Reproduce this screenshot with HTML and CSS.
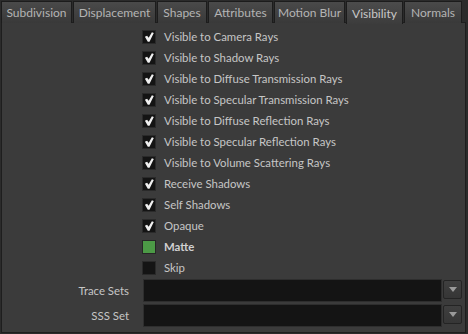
FILE: index.html
```html
<!DOCTYPE html>
<html>
<head>
  <title>Visibility</title>
  <link rel="stylesheet" href="styles.css">
</head>
<body>
  <!-- Tab bar -->
  <div class="tabs">
    <div class="tab tab-subdiv">Subdivision</div>
    <div class="tab tab-disp">Displacement</div>
    <div class="tab tab-shapes">Shapes</div>
    <div class="tab tab-attr">Attributes</div>
    <div class="tab tab-blur">Motion Blur</div>
    <div class="tab tab-vis active">Visibility</div>
    <div class="tab tab-norm">Normals</div>
  </div>

  <div class="panel">
    <div class="check-row"><span class="box checked"><svg viewBox="0 0 14 14"><path d="M2.2 6.6 L4.8 5.4 L6.6 8 L10.4 1.4 L12.6 2.4 L7.6 12.4 L5.6 12.4 Z"/></svg></span>Visible to Camera Rays</div>
    <div class="check-row"><span class="box checked"><svg viewBox="0 0 14 14"><path d="M2.2 6.6 L4.8 5.4 L6.6 8 L10.4 1.4 L12.6 2.4 L7.6 12.4 L5.6 12.4 Z"/></svg></span>Visible to Shadow Rays</div>
    <div class="check-row"><span class="box checked"><svg viewBox="0 0 14 14"><path d="M2.2 6.6 L4.8 5.4 L6.6 8 L10.4 1.4 L12.6 2.4 L7.6 12.4 L5.6 12.4 Z"/></svg></span>Visible to Diffuse Transmission Rays</div>
    <div class="check-row"><span class="box checked"><svg viewBox="0 0 14 14"><path d="M2.2 6.6 L4.8 5.4 L6.6 8 L10.4 1.4 L12.6 2.4 L7.6 12.4 L5.6 12.4 Z"/></svg></span>Visible to Specular Transmission Rays</div>
    <div class="check-row"><span class="box checked"><svg viewBox="0 0 14 14"><path d="M2.2 6.6 L4.8 5.4 L6.6 8 L10.4 1.4 L12.6 2.4 L7.6 12.4 L5.6 12.4 Z"/></svg></span>Visible to Diffuse Reflection Rays</div>
    <div class="check-row"><span class="box checked"><svg viewBox="0 0 14 14"><path d="M2.2 6.6 L4.8 5.4 L6.6 8 L10.4 1.4 L12.6 2.4 L7.6 12.4 L5.6 12.4 Z"/></svg></span>Visible to Specular Reflection Rays</div>
    <div class="check-row"><span class="box checked"><svg viewBox="0 0 14 14"><path d="M2.2 6.6 L4.8 5.4 L6.6 8 L10.4 1.4 L12.6 2.4 L7.6 12.4 L5.6 12.4 Z"/></svg></span>Visible to Volume Scattering Rays</div>
    <div class="check-row"><span class="box checked"><svg viewBox="0 0 14 14"><path d="M2.2 6.6 L4.8 5.4 L6.6 8 L10.4 1.4 L12.6 2.4 L7.6 12.4 L5.6 12.4 Z"/></svg></span>Receive Shadows</div>
    <div class="check-row"><span class="box checked"><svg viewBox="0 0 14 14"><path d="M2.2 6.6 L4.8 5.4 L6.6 8 L10.4 1.4 L12.6 2.4 L7.6 12.4 L5.6 12.4 Z"/></svg></span>Self Shadows</div>
    <div class="check-row"><span class="box checked"><svg viewBox="0 0 14 14"><path d="M2.2 6.6 L4.8 5.4 L6.6 8 L10.4 1.4 L12.6 2.4 L7.6 12.4 L5.6 12.4 Z"/></svg></span>Opaque</div>
    <div class="check-row"><span class="box green"></span><span class="bold">Matte</span></div>
    <div class="check-row"><span class="box"></span>Skip</div>

    <div class="field-row first">
      <div class="field-label">Trace Sets</div>
      <div class="field"></div>
      <div class="menu-btn"><span class="arrow"></span></div>
    </div>
    <div class="field-row">
      <div class="field-label">SSS Set</div>
      <div class="field"></div>
      <div class="menu-btn"><span class="arrow"></span></div>
    </div>
  </div>
</body>
</html>
```

FILE: styles.css
```css
body {
  margin: 0;
  padding: 0;
  width: 468px;
  height: 334px;
  background-color: #2b2b2b;
  font-family: 'Lato', sans-serif;
  font-size: 11.4px;
  color: #c6c6c6;
  overflow: hidden;
}

.tabs {
  display: flex;
  height: 22px;
  padding-left: 1px;
}

.tab {
  box-sizing: border-box;
  height: 22px;
  margin-top: 1px;
  margin-right: 1px;
  border: 1px solid #1c1c1c;
  border-bottom: none;
  background: linear-gradient(#4a4a4a, #393939);
  font-size: 12px;
  color: #b4b4b4;
  display: flex;
  align-items: center;
  justify-content: center;
}

.tab-subdiv { width: 71px; }
.tab-disp { width: 83px; }
.tab-shapes { width: 50px; }
.tab-attr { width: 65px; }
.tab-blur { width: 71px; }
.tab-vis { width: 57px; }
.tab-norm { width: 58px; }

.tab.active {
  background: linear-gradient(#4c4c4c, #3c3c3c);
  color: #c8c8c8;
  height: 23px;
  position: relative;
  z-index: 1;
}

.panel {
  box-sizing: border-box;
  margin-left: 1px;
  width: 465px;
  height: 311px;
  background-color: #3b3b3b;
  border: 1px solid #1e1e1e;
  padding-top: 3px;
}

.check-row {
  display: flex;
  align-items: center;
  height: 21px;
  padding-left: 140px;
}

.box {
  box-sizing: border-box;
  width: 14px;
  height: 14px;
  margin-right: 8px;
  background-color: #141414;
  border: 1px solid #2a2a2a;
  display: flex;
}

.box svg {
  width: 12px;
  height: 12px;
  fill: #f0f0f0;
}

.box.green {
  background-color: #4c9a46;
  border-color: #262626;
}

.bold {
  font-weight: bold;
  color: #d0d0d0;
}

.field-row {
  display: flex;
  align-items: center;
  height: 23px;
  margin-bottom: 2px;
}

.field-row.first {
  margin-top: 1px;
}

.field-label {
  width: 127px;
  text-align: right;
  margin-right: 14px;
}

.field {
  box-sizing: border-box;
  width: 299px;
  height: 23px;
  background-color: #141414;
  border: 1px solid #2e2e2e;
}

.menu-btn {
  box-sizing: border-box;
  width: 19px;
  height: 19px;
  margin-left: 1px;
  margin-top: -2px;
  background: linear-gradient(#3f3f3f, #363636);
  border: 1px solid #242424;
  border-radius: 2px;
  display: flex;
  align-items: center;
  justify-content: center;
}

.arrow {
  width: 0;
  height: 0;
  border-left: 4px solid transparent;
  border-right: 4px solid transparent;
  border-top: 5px solid #9a9a9a;
}
```
